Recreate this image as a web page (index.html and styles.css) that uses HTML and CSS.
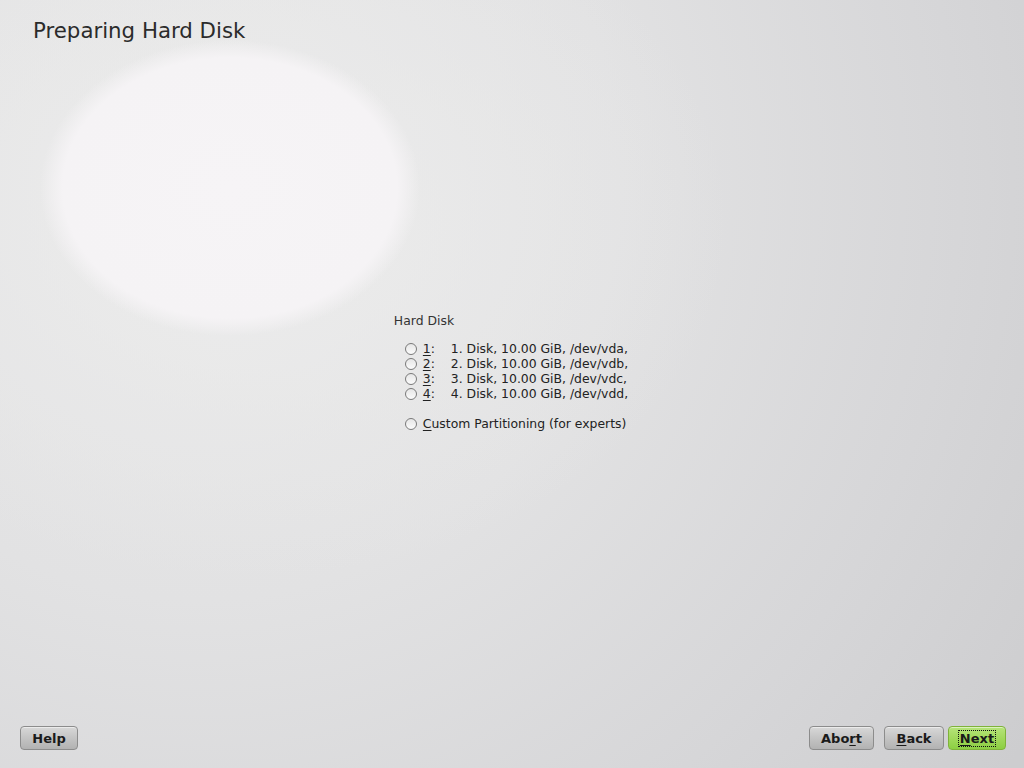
FILE: index.html
```html
<!DOCTYPE html>
<html>
<head>
<meta charset="utf-8">
<link rel="stylesheet" href="styles.css">
</head>
<body>
<div class="page">
  <h1 class="title">Preparing Hard Disk</h1>
  <main class="content">
    <div class="group">
      <div class="group-label">Hard Disk</div>
      <div class="options">
        <label class="opt"><span class="radio"></span><span class="key"><u>1</u>:</span><span class="desc">1. Disk, 10.00 GiB, /dev/vda,</span></label>
        <label class="opt"><span class="radio"></span><span class="key"><u>2</u>:</span><span class="desc">2. Disk, 10.00 GiB, /dev/vdb,</span></label>
        <label class="opt"><span class="radio"></span><span class="key"><u>3</u>:</span><span class="desc">3. Disk, 10.00 GiB, /dev/vdc,</span></label>
        <label class="opt"><span class="radio"></span><span class="key"><u>4</u>:</span><span class="desc">4. Disk, 10.00 GiB, /dev/vdd,</span></label>
        <label class="opt custom"><span class="radio"></span><span><u>C</u>ustom Partitioning (for experts)</span></label>
      </div>
    </div>
  </main>
  <footer class="buttons">
    <button class="btn help">Help</button>
    <div class="spacer"></div>
    <button class="btn abort">Abo<u>r</u>t</button>
    <button class="btn back"><u>B</u>ack</button>
    <button class="btn next"><span class="focus"><u>N</u>ext</span></button>
  </footer>
</div>
</body>
</html>
```
FILE: styles.css
```css
html, body {
  margin: 0;
  padding: 0;
}
body {
  width: 1024px;
  height: 768px;
  overflow: hidden;
  font-family: "DejaVu Sans", sans-serif;
  color: #222;
  background:
    radial-gradient(ellipse 190px 148px at 230px 188px, #f6f4f6 0%, #f5f3f5 88%, rgba(242,241,242,0) 100%),
    radial-gradient(ellipse 480px 360px at 250px 220px, rgba(237,237,237,0.85) 0%, rgba(234,234,234,0.5) 55%, rgba(230,230,230,0) 100%),
    radial-gradient(circle at 200px 180px, #eaeaea 0px, #e2e2e3 420px, #d6d6d8 760px, #cdcdcf 1000px);
}
.page {
  height: 768px;
  display: flex;
  flex-direction: column;
}
.title {
  margin: 0;
  padding: 17px 0 0 33px;
  font-size: 21.3px;
  font-weight: normal;
  color: #2b2b2b;
  line-height: 28px;
}
.content {
  flex: 1;
  display: flex;
  justify-content: center;
  padding-top: 268px;
}
.group {
  margin-left: -2px;
  font-size: 12.4px;
  color: #222;
}
.group-label {
  line-height: 16px;
  margin-bottom: 12px;
  color: #333;
}
.options {
  padding-left: 11px;
  display: flex;
  flex-direction: column;
}
.opt {
  display: flex;
  align-items: center;
  height: 15px;
  line-height: 15px;
}
.opt.custom {
  margin-top: 15px;
}
.radio {
  width: 10px;
  height: 10px;
  border: 1px solid #7a7a7a;
  border-radius: 50%;
  background: linear-gradient(#e6e6e6, #fbfbfb);
  margin-right: 6px;
}
.key {
  width: 28px;
}
u {
  text-decoration-thickness: 1px;
  text-underline-offset: 2px;
}
.buttons {
  display: flex;
  align-items: center;
  padding: 0 18px 18px 20px;
  gap: 10px;
}
.spacer {
  flex: 1;
}
.btn {
  height: 24px;
  padding: 0 6px;
  font-family: "DejaVu Sans", sans-serif;
  font-weight: bold;
  font-size: 13px;
  color: #1a1a1a;
  border: 1px solid #8c8c8c;
  border-radius: 4px;
  background: linear-gradient(#d8d8d8 0%, #c4c4c4 50%, #b2b2b2 100%);
  box-shadow: inset 0 1px 0 rgba(255,255,255,0.5);
}
.help { width: 58px; }
.abort { width: 65px; }
.back { width: 60px; }
.next {
  width: 58px;
  margin-left: -6px;
  border-color: #7fb23a;
  background: linear-gradient(#b6e47a 0%, #a2d95c 50%, #8ccf43 100%);
}
.focus {
  outline: 1px dotted #111;
  padding: 0 1px;
}
```
